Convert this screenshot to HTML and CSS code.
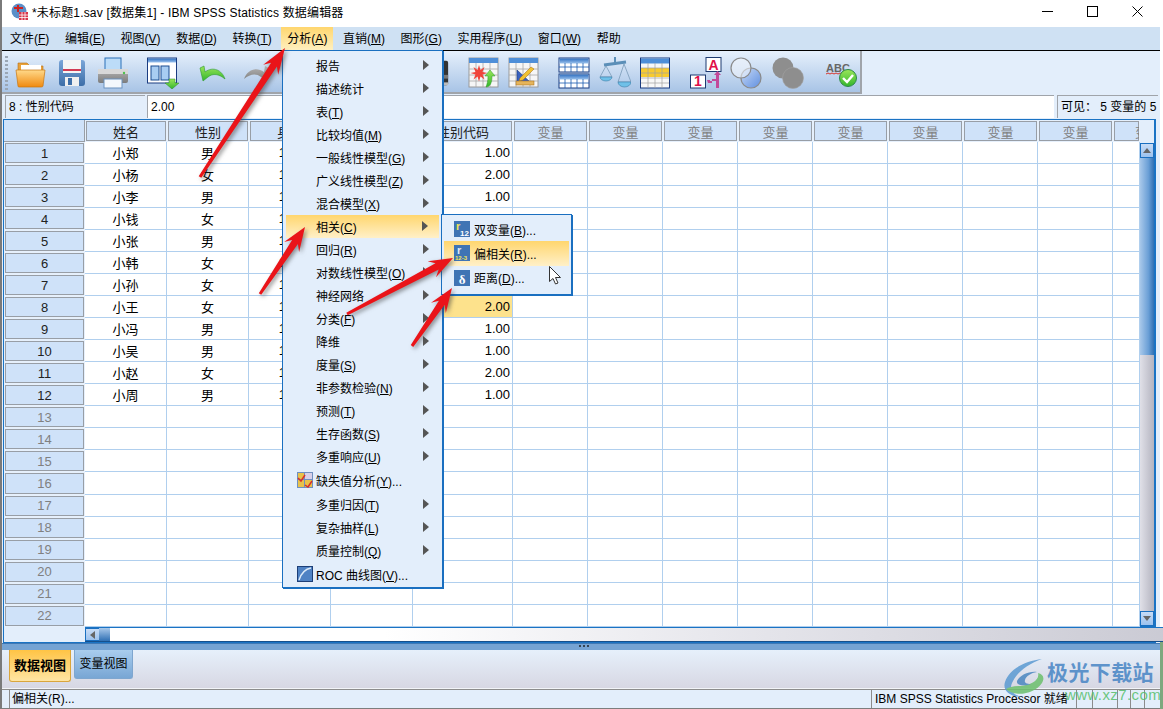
FILE: index.html
```html
<!DOCTYPE html>
<html lang="zh-CN">

<head>
  <meta charset="UTF-8">
  <title>IBM SPSS Statistics 数据编辑器</title>
  <link rel="stylesheet" href="styles.css">
</head>

<body>
  <svg class="svg-defs" width="0" height="0">
    <defs>
      <linearGradient id="gFolder" x1="0" y1="0" x2="0" y2="1"><stop offset="0" stop-color="#ffd98a"/><stop offset="1" stop-color="#f08a10"/></linearGradient>
      <linearGradient id="gBlue" x1="0" y1="0" x2="0" y2="1"><stop offset="0" stop-color="#7aa5d8"/><stop offset="1" stop-color="#3d6ea8"/></linearGradient>
      <linearGradient id="gHead" x1="0" y1="0" x2="0" y2="1"><stop offset="0" stop-color="#2f6fc0"/><stop offset="1" stop-color="#9cc3ee"/></linearGradient>
      <linearGradient id="gGreen" x1="0" y1="0" x2="0" y2="1"><stop offset="0" stop-color="#9be65a"/><stop offset="1" stop-color="#32b52c"/></linearGradient>
      <linearGradient id="gGray" x1="0" y1="0" x2="0" y2="1"><stop offset="0" stop-color="#b5b5b5"/><stop offset="1" stop-color="#7c7c7c"/></linearGradient>
      <linearGradient id="gRing" x1="0" y1="0" x2="1" y2="1"><stop offset="0" stop-color="#c8daf6"/><stop offset="1" stop-color="#5f8fe0"/></linearGradient>
    </defs>
  </svg>

  <div class="window">
    <header class="titlebar">
      <svg class="app-icon" viewBox="0 0 18 18" width="18" height="18">
        <circle cx="8" cy="8" r="7.5" fill="#5b8fc8"/>
        <path d="M3 5h9M7 2v7" stroke="#c22" stroke-width="2" fill="none"/>
        <rect x="8" y="9" width="9" height="8" fill="#d8344a"/>
        <path d="M8 12h9M8 14.5h9M11 9v8M14 9v8" stroke="#fff" stroke-width=".8"/>
      </svg>
      <span class="title-text">*未标题1.sav [数据集1] - IBM SPSS Statistics 数据编辑器</span>
      <div class="win-btns">
        <svg viewBox="0 0 11 11" width="11" height="11"><path d="M0 5.5h11" stroke="#000"/></svg>
        <svg viewBox="0 0 11 11" width="11" height="11"><rect x=".5" y=".5" width="10" height="10" fill="none" stroke="#000"/></svg>
        <svg viewBox="0 0 11 11" width="11" height="11"><path d="M.5 .5l10 10M10.5 .5l-10 10" stroke="#000"/></svg>
      </div>
    </header>

    <nav class="menubar">
      <span class="mb-item">文件(<u>F</u>)</span>
      <span class="mb-item">编辑(<u>E</u>)</span>
      <span class="mb-item">视图(<u>V</u>)</span>
      <span class="mb-item">数据(<u>D</u>)</span>
      <span class="mb-item">转换(<u>T</u>)</span>
      <span class="mb-item mb-active">分析(<u>A</u>)</span>
      <span class="mb-item">直销(<u>M</u>)</span>
      <span class="mb-item">图形(<u>G</u>)</span>
      <span class="mb-item">实用程序(<u>U</u>)</span>
      <span class="mb-item">窗口(<u>W</u>)</span>
      <span class="mb-item">帮助</span>
    </nav>

    <div class="toolbar-row">
      <div class="toolbar">
        <div class="tool-handle"></div>
        <div class="tool-group">
          <svg class="tool" viewBox="0 0 32 32">
            <path d="M3 6h9l3 3h13v6H3z" fill="#e8a23a" stroke="#b5701a" stroke-width=".6"/>
            <rect x="6" y="8" width="20" height="8" fill="#fff"/>
            <path d="M1 13h29l-2 16q0 1-2 1H4q-1 0-1-1z" fill="url(#gFolder)" stroke="#c9760e" stroke-width=".7"/>
          </svg>
          <svg class="tool tool-save" viewBox="0 0 28 28">
            <rect x="1" y="1" width="26" height="26" rx="3" fill="url(#gBlue)"/>
            <rect x="5" y="1" width="18" height="13" fill="#f4f4f4"/>
            <rect x="5" y="10" width="18" height="2" fill="#d23a52"/>
            <rect x="7" y="18" width="14" height="9" fill="#f0f0f0"/>
            <rect x="10" y="19" width="4" height="7" fill="#3d6ea8"/>
          </svg>
          <svg class="tool" viewBox="0 0 32 32">
            <rect x="8" y="1" width="16" height="12" fill="#bcdcf8" stroke="#2a70b8"/>
            <path d="M3 12h26q2 0 2 2v10q0 2-2 2H3q-2 0-2-2V14q0-2 2-2z" fill="url(#gGray)"/>
            <rect x="1" y="12" width="30" height="5" fill="#d8d8d8"/>
            <rect x="7" y="22" width="18" height="9" fill="#f4f8fc" stroke="#6d93bf"/>
            <circle cx="27" cy="16" r="1.2" fill="#4ec24e"/>
          </svg>
        </div>
        <div class="tool-group">
          <svg class="tool" viewBox="0 0 32 32">
            <rect x=".5" y="1" width="29" height="25" fill="#fff" stroke="#1b3c80"/>
            <rect x="1" y="1.5" width="28" height="4" fill="url(#gHead)"/>
            <rect x="4" y="9" width="8" height="14" fill="#a8cdf2" stroke="#1b4c90"/>
            <rect x="14" y="9" width="8" height="14" fill="#a8cdf2" stroke="#1b4c90"/>
            <path d="M22 22h6v4h4l-7 6-7-6h4z" fill="url(#gGreen)" stroke="#2a8a2a" stroke-width=".5"/>
          </svg>
        </div>
        <div class="tool-group tool-group-wide">
          <svg class="tool" viewBox="0 0 32 32">
            <path d="M3 11l3 13 5-4c5-4 11-3 17 2-3-9-12-13-20-7l-1-6z" fill="url(#gGreen)" stroke="#2e9a2e" stroke-width=".6"/>
          </svg>
          <svg class="tool" viewBox="0 0 32 32">
            <path d="M29 11l-3 13-5-4c-5-4-11-3-17 2 3-9 12-13 20-7l1-6z" fill="url(#gGray)"/>
          </svg>
        </div>
        <div class="tool-spacer"></div>
        <svg class="tool tool-binoc" viewBox="0 0 32 32">
          <rect x="2" y="3" width="11" height="26" rx="2" fill="#333"/>
          <rect x="19" y="3" width="11" height="26" rx="2" fill="#333"/>
          <rect x="19" y="18" width="11" height="4" fill="#777"/>
          <rect x="19" y="26" width="11" height="3" fill="#bbb"/>
        </svg>
        <div class="tool-group tool-group-mid">
          <svg class="tool" viewBox="0 0 32 32">
            <rect x="1" y="1" width="29" height="29" fill="#f6f6f6" stroke="#9a9a9a"/>
            <rect x="1" y="1" width="29" height="5" fill="#4f8fd8"/>
            <path d="M1 12h29M1 18h29M1 24h29M8 6v24M15 6v24M22 6v24" stroke="#a8a8a8" stroke-width=".8"/>
            <path d="M11 8l1.5 5 4-3-2 5 5 1-5 1.5 2 5-4-3-1.5 5-1.5-5-4 3 2-5-5-1.5 5-1-2-5 4 3z" fill="#f0443a"/>
            <path d="M18 30c4 0 6-4 6-11h3l-5-6-5 6h3c0 5-1 8-2 11z" fill="url(#gGreen)" stroke="#2e9a2e" stroke-width=".5"/>
          </svg>
          <svg class="tool" viewBox="0 0 32 32">
            <rect x="1" y="1" width="29" height="29" fill="#f6f6f6" stroke="#9a9a9a"/>
            <rect x="1" y="1" width="29" height="5" fill="#4f8fd8"/>
            <path d="M1 12h29M1 18h29M1 24h29M8 6v24M15 6v24M22 6v24" stroke="#a8a8a8" stroke-width=".8"/>
            <path d="M9 13v12h13z" fill="#3a62c0" stroke="#1b3c80" stroke-width=".6"/>
            <path d="M12 21l11-11 3 2-11 11-4 1z" fill="#f2c230" stroke="#a56a10" stroke-width=".5"/>
            <rect x="8" y="24" width="18" height="4" fill="#e4b45c" stroke="#a56a10" stroke-width=".5"/>
          </svg>
        </div>
        <div class="tool-group">
          <svg class="tool" viewBox="0 0 32 32">
            <rect x="1" y="1" width="30" height="14" fill="#fff" stroke="#1b3c80"/>
            <rect x="1.5" y="1.5" width="29" height="5" fill="url(#gHead)"/>
            <path d="M1 10h30M7 6v9M13 6v9M19 6v9M25 6v9" stroke="#1b5cb0" stroke-width=".8"/>
            <rect x="1" y="17" width="30" height="14" fill="#fff" stroke="#1b3c80"/>
            <rect x="1.5" y="17.5" width="29" height="5" fill="url(#gHead)"/>
            <path d="M1 26h30M7 22v9M13 22v9M19 22v9M25 22v9" stroke="#1b5cb0" stroke-width=".8"/>
          </svg>
          <svg class="tool" viewBox="0 0 32 32">
            <path d="M5 8l22-3" stroke="#5b8fb8" stroke-width="3"/>
            <path d="M16 0v8" stroke="#5b8fb8" stroke-width="2"/>
            <path d="M7 9L1 20h12zM25 7l-6 18h13z" fill="none" stroke="#7a9ab8" stroke-width=".8"/>
            <path d="M1 20a6 4 0 0 0 12 0z" fill="#6fc0e8" stroke="#3b7ea8" stroke-width=".6"/>
            <path d="M19 25a6.5 5 0 0 0 13 0z" fill="#6fc0e8" stroke="#3b7ea8" stroke-width=".6"/>
          </svg>
          <svg class="tool tool-tight" viewBox="0 0 30 32">
            <rect x=".5" y="1" width="29" height="30" fill="#f8f8f8" stroke="#1b3c80"/>
            <rect x="1" y="1.5" width="28" height="5" fill="#4f8fd8"/>
            <rect x="1" y="11" width="28" height="9" fill="#f8cb30"/>
            <path d="M1 11h28M1 16h28M1 21h28M1 26h28M8 6v25M15 6v25M22 6v25" stroke="#a0a0a0" stroke-width=".7"/>
          </svg>
        </div>
        <div class="tool-group tool-group-end">
          <svg class="tool" viewBox="0 0 32 32">
            <rect x="16" y=".5" width="15" height="14" fill="#fff" stroke="#1d3a70"/>
            <text x="23.5" y="12.5" class="icon-letter">A</text>
            <rect x=".5" y="18" width="15" height="13" fill="#fff" stroke="#1d3a70"/>
            <text x="8" y="29" class="icon-letter">1</text>
            <path d="M18 26h4v-4l4 0v9h3v-13h2l-3.500-4-3.500 4h2v6h-6v-1h-3z" fill="#c24a9a"/>
          </svg>
          <svg class="tool" viewBox="0 0 32 32">
            <circle cx="21" cy="21" r="10" fill="url(#gRing)" stroke="#8a8a8a" stroke-width="1.2"/>
            <circle cx="11" cy="11" r="10" fill="#f2f6fc" fill-opacity=".55" stroke="#8a8a8a" stroke-width="1.2"/>
          </svg>
          <svg class="tool tool-wider" viewBox="0 0 32 32">
            <circle cx="11" cy="11" r="10.5" fill="#8e8e8e"/>
            <circle cx="21" cy="21" r="10.5" fill="#8e8e8e" stroke="#a2a2a2" stroke-width=".6"/>
          </svg>
          <svg class="tool tool-widest" viewBox="0 0 32 32">
            <text x="1" y="15" class="icon-abc">ABC</text>
            <path d="M1 17l2-1 2 1 2-1 2 1 2-1 2 1 2-1 2 1" stroke="#d8342a" fill="none"/>
            <circle cx="23" cy="21" r="8.5" fill="url(#gGreen)" stroke="#2c8a4a"/>
            <path d="M18 21l4 4 6-7" stroke="#fff" stroke-width="2.4" fill="none"/>
          </svg>
        </div>
      </div>
    </div>

    <div class="cellbar">
      <div class="cell-name">8 : 性别代码</div>
      <div class="cell-value">2.00</div>
      <div class="cell-visible">可见： <span>5 变量的 5</span></div>
    </div>

    <section class="sheet">
      <div class="sheet-view">
        <table class="data-table">
          <colgroup>
            <col class="col-row"><col class="col-a"><col class="col-a"><col class="col-a"><col class="col-a"><col class="col-code">
            <col class="col-var"><col class="col-var"><col class="col-var"><col class="col-var"><col class="col-var"><col class="col-var"><col class="col-var"><col class="col-var"><col class="col-end">
          </colgroup>
          <thead>
            <tr><th class="corner"></th><th>姓名</th><th>性别</th><th>身高</th><th></th><th>性别代码</th><th class="off">变量</th><th class="off">变量</th><th class="off">变量</th><th class="off">变量</th><th class="off">变量</th><th class="off">变量</th><th class="off">变量</th><th class="off">变量</th><th class="off col-cut">变量</th></tr>
          </thead>
          <tbody>
            <tr><th>1</th><td>小郑</td><td>男</td><td>175</td><td></td><td class="num">1.00</td><td></td><td></td><td></td><td></td><td></td><td></td><td></td><td></td><td></td></tr>
            <tr><th>2</th><td>小杨</td><td>女</td><td>162</td><td></td><td class="num">2.00</td><td></td><td></td><td></td><td></td><td></td><td></td><td></td><td></td><td></td></tr>
            <tr><th>3</th><td>小李</td><td>男</td><td>178</td><td></td><td class="num">1.00</td><td></td><td></td><td></td><td></td><td></td><td></td><td></td><td></td><td></td></tr>
            <tr><th>4</th><td>小钱</td><td>女</td><td>160</td><td></td><td></td><td></td><td></td><td></td><td></td><td></td><td></td><td></td><td></td><td></td></tr>
            <tr><th>5</th><td>小张</td><td>男</td><td>172</td><td></td><td></td><td></td><td></td><td></td><td></td><td></td><td></td><td></td><td></td><td></td></tr>
            <tr><th>6</th><td>小韩</td><td>女</td><td>165</td><td></td><td></td><td></td><td></td><td></td><td></td><td></td><td></td><td></td><td></td><td></td></tr>
            <tr><th>7</th><td>小孙</td><td>女</td><td>158</td><td></td><td></td><td></td><td></td><td></td><td></td><td></td><td></td><td></td><td></td><td></td></tr>
            <tr><th>8</th><td>小王</td><td>女</td><td>163</td><td></td><td class="num selected">2.00</td><td></td><td></td><td></td><td></td><td></td><td></td><td></td><td></td><td></td></tr>
            <tr><th>9</th><td>小冯</td><td>男</td><td>180</td><td></td><td class="num">1.00</td><td></td><td></td><td></td><td></td><td></td><td></td><td></td><td></td><td></td></tr>
            <tr><th>10</th><td>小吴</td><td>男</td><td>170</td><td></td><td class="num">1.00</td><td></td><td></td><td></td><td></td><td></td><td></td><td></td><td></td><td></td></tr>
            <tr><th>11</th><td>小赵</td><td>女</td><td>161</td><td></td><td class="num">2.00</td><td></td><td></td><td></td><td></td><td></td><td></td><td></td><td></td><td></td></tr>
            <tr><th>12</th><td>小周</td><td>男</td><td>176</td><td></td><td class="num">1.00</td><td></td><td></td><td></td><td></td><td></td><td></td><td></td><td></td><td></td></tr>
            <tr><th class="off">13</th><td></td><td></td><td></td><td></td><td></td><td></td><td></td><td></td><td></td><td></td><td></td><td></td><td></td><td></td></tr>
            <tr><th class="off">14</th><td></td><td></td><td></td><td></td><td></td><td></td><td></td><td></td><td></td><td></td><td></td><td></td><td></td><td></td></tr>
            <tr><th class="off">15</th><td></td><td></td><td></td><td></td><td></td><td></td><td></td><td></td><td></td><td></td><td></td><td></td><td></td><td></td></tr>
            <tr><th class="off">16</th><td></td><td></td><td></td><td></td><td></td><td></td><td></td><td></td><td></td><td></td><td></td><td></td><td></td><td></td></tr>
            <tr><th class="off">17</th><td></td><td></td><td></td><td></td><td></td><td></td><td></td><td></td><td></td><td></td><td></td><td></td><td></td><td></td></tr>
            <tr><th class="off">18</th><td></td><td></td><td></td><td></td><td></td><td></td><td></td><td></td><td></td><td></td><td></td><td></td><td></td><td></td></tr>
            <tr><th class="off">19</th><td></td><td></td><td></td><td></td><td></td><td></td><td></td><td></td><td></td><td></td><td></td><td></td><td></td><td></td></tr>
            <tr><th class="off">20</th><td></td><td></td><td></td><td></td><td></td><td></td><td></td><td></td><td></td><td></td><td></td><td></td><td></td><td></td></tr>
            <tr><th class="off">21</th><td></td><td></td><td></td><td></td><td></td><td></td><td></td><td></td><td></td><td></td><td></td><td></td><td></td><td></td></tr>
            <tr><th class="off">22</th><td></td><td></td><td></td><td></td><td></td><td></td><td></td><td></td><td></td><td></td><td></td><td></td><td></td><td></td></tr>
          </tbody>
        </table>
        <div class="vscroll">
          <div class="sb-btn"><i class="tri-up"></i></div>
          <div class="vthumb"></div>
          <div class="vtrack"></div>
          <div class="sb-btn"><i class="tri-down"></i></div>
        </div>
      </div>
      <div class="hscroll">
        <div class="sb-btn sb-left"><i class="tri-left"></i></div>
        <div class="hthumb"></div>
        <div class="htrack"></div>
        <div class="sb-btn"><i class="tri-right"></i></div>
      </div>
    </section>

    <div class="splitter"><span></span></div>

    <div class="tabs">
      <div class="tab tab-on">数据视图</div>
      <div class="tab">变量视图</div>
    </div>

    <footer class="statusbar">
      <div class="st-main">偏相关(R)...</div>
      <div class="st-proc">IBM SPSS Statistics Processor 就绪</div>
      <div class="st-cell st-w16"></div>
      <div class="st-cell st-w25"></div>
      <div class="st-cell st-w13"></div>
      <div class="st-cell st-w14"></div>
      <div class="st-cell st-w10"></div>
    </footer>
  </div>

  <ul class="menu">
    <li class="sub"><span>报告</span></li>
    <li class="sub"><span>描述统计</span></li>
    <li class="sub"><span>表(<u>T</u>)</span></li>
    <li class="sub"><span>比较均值(<u>M</u>)</span></li>
    <li class="sub"><span>一般线性模型(<u>G</u>)</span></li>
    <li class="sub"><span>广义线性模型(<u>Z</u>)</span></li>
    <li class="sub"><span>混合模型(<u>X</u>)</span></li>
    <li class="sub hot"><span>相关(<u>C</u>)</span></li>
    <li class="sub"><span>回归(<u>R</u>)</span></li>
    <li class="sub"><span>对数线性模型(<u>O</u>)</span></li>
    <li class="sub"><span>神经网络</span></li>
    <li class="sub"><span>分类(<u>F</u>)</span></li>
    <li class="sub"><span>降维</span></li>
    <li class="sub"><span>度量(<u>S</u>)</span></li>
    <li class="sub"><span>非参数检验(<u>N</u>)</span></li>
    <li class="sub"><span>预测(<u>T</u>)</span></li>
    <li class="sub"><span>生存函数(<u>S</u>)</span></li>
    <li class="sub"><span>多重响应(<u>U</u>)</span></li>
    <li class="with-icon">
      <svg class="menu-icon" viewBox="0 0 16 16">
        <rect width="16" height="16" fill="#6f8fc0"/>
        <rect x="1" y="1" width="6" height="6" fill="#e8c24a"/><rect x="8" y="1" width="7" height="6" fill="#d8d0e8"/>
        <rect x="1" y="8" width="6" height="7" fill="#e8c24a"/><rect x="8" y="8" width="7" height="7" fill="#e8c24a"/>
        <path d="M1 6l3 3 4-6M8 13l3 2 4-6" stroke="#d8302a" stroke-width="1.5" fill="none"/>
      </svg>
      <span>缺失值分析(<u>Y</u>)...</span>
    </li>
    <li class="sub"><span>多重归因(<u>T</u>)</span></li>
    <li class="sub"><span>复杂抽样(<u>L</u>)</span></li>
    <li class="sub"><span>质量控制(<u>Q</u>)</span></li>
    <li class="with-icon">
      <svg class="menu-icon" viewBox="0 0 16 16">
        <rect x=".5" y=".5" width="15" height="15" fill="#4f82c4" stroke="#1d3f78"/>
        <path d="M2 14C4 8 8 3 14 2" stroke="#dbe9f8" stroke-width="1.5" fill="none"/>
      </svg>
      <span>ROC 曲线图(<u>V</u>)...</span>
    </li>
  </ul>

  <ul class="submenu">
    <li>
      <svg class="menu-icon" viewBox="0 0 16 16">
        <rect width="16" height="16" fill="#3f74b4"/>
        <text x="2" y="9" class="icon-r icon-yellow">r</text>
        <text x="6" y="15" class="icon-num">12</text>
      </svg>
      <span>双变量(<u>B</u>)...</span>
    </li>
    <li class="hot">
      <svg class="menu-icon" viewBox="0 0 16 16">
        <rect width="16" height="16" fill="#3f74b4"/>
        <text x="3" y="9" class="icon-r">r</text>
        <text x="1" y="15" class="icon-num icon-small icon-yellow">12-3</text>
      </svg>
      <span>偏相关(<u>R</u>)...</span>
    </li>
    <li>
      <svg class="menu-icon" viewBox="0 0 16 16">
        <rect width="16" height="16" fill="#3f74b4"/>
        <text x="8" y="14" class="icon-delta">δ</text>
      </svg>
      <span>距离(<u>D</u>)...</span>
    </li>
  </ul>

  <svg class="marks" viewBox="0 0 1163 709" width="1163" height="709">
    <g class="red-arrows">
      <polygon points="201.3,177.8 276.9,66.6 278.2,74.7 285,48 263.2,64.7 271.1,62.8 198.7,176.2"/>
      <polygon points="261.2,294.8 297.9,243.9 299.1,251.9 305,227 284.1,241.9 292.1,239.9 258.8,293.2"/>
      <polygon points="347.7,315.3 438.7,269.5 436,277.2 453,258 427.6,261.2 435.5,263.3 346.3,312.7"/>
      <polygon points="413.2,346.9 444.7,304.8 445.8,312.9 452,288 431,302.7 438.9,300.8 410.8,345.1"/>
    </g>
    <path class="pointer" d="M549.5 266.5v15l3.5-3 2.5 5.5 2.5-1-2.500-5.500h5z"/>
    <g class="wm-logo">
      <path d="M1042 659c-16 2-32 9-37 23-3 9 6 15 17 15-9-2-13-7-10-14 5-11 16-19 30-24z" fill="#5b9ad2"/>
      <path d="M1006 689c8 8 28 6 36-6 3-5 1-9-4-10 2 7-7 12-18 13-6 0-11 1-14 3z" fill="#6cc06c"/>
      <path d="M1017 681c3-6 12-10 20-9-6 1-11 4-12 8-1 3 2 4 6 4-6 2-15 2-14-3z" fill="#4a86c0"/>
    </g>
  </svg>

  <div class="watermark">
    <div class="wm-name">极光下载站</div>
    <div class="wm-url">www.xz7.com</div>
  </div>
</body>

</html>
```

FILE: styles.css
```css
html,
body {
  margin: 0;
  height: 100%;
}

body {
  position: relative;
  width: 1163px;
  height: 709px;
  overflow: hidden;
  background: linear-gradient(to bottom, #fff 640px, #7ea87e 640px);
  font-family: "Liberation Sans", "Noto Sans CJK SC", sans-serif;
  font-size: 12px;
  color: #000;
}

ul {
  margin: 0;
  padding: 0;
  list-style: none;
}

.svg-defs {
  display: block;
  height: 0;
}

.window {
  display: flex;
  flex-direction: column;
  box-sizing: border-box;
  width: 1160px;
  height: 709px;
  border-left: 2px solid #7a7a7a;
  border-bottom: 3px solid #7d7d7d;
  background-color: #e3eefb;
}

/* title */
.titlebar {
  display: flex;
  align-items: center;
  flex: none;
  box-sizing: border-box;
  height: 27px;
  padding: 0 0 4px 9px;
  background-color: #fff;
}

.app-icon {
  margin-right: 3px;
}

.title-text {
  letter-spacing: .17px;
}

.win-btns {
  display: flex;
  gap: 34px;
  margin-left: auto;
  padding-right: 17px;
}

/* menu bar */
.menubar {
  display: flex;
  flex: none;
  box-sizing: border-box;
  height: 24px;
  padding-left: 2px;
  border-bottom: 1px solid #000;
  background-color: #cfe1f3;
}

.mb-item {
  padding: 2px 6px 0;
  margin-right: 3.6px;
  line-height: 21px;
  font-size: 12px;
}

.mb-active {
  background: linear-gradient(to bottom, #ffd66e, #fff0c0);
}

/* toolbar */
.toolbar-row {
  flex: none;
  height: 44px;
}

.toolbar {
  display: flex;
  align-items: center;
  box-sizing: border-box;
  width: 860px;
  height: 43px;
  padding-top: 3px;
  border-right: 2px solid #a0a4aa;
  border-bottom: 2px solid #a0a4aa;
  background: linear-gradient(to bottom, #e6f0fc, #a8c4e6);
}

.tool-handle {
  width: 3px;
  height: 34px;
  margin: 0 7px 0 3px;
  background: repeating-linear-gradient(to bottom, #9aa6b4 0 2px, transparent 2px 4px);
}

.tool-group {
  display: flex;
  gap: 9px;
  margin-right: 18px;
}

.tool {
  flex: none;
  width: 32px;
  height: 32px;
}

.tool-save {
  width: 28px;
  height: 28px;
  margin: 2px;
}

.tool-group-wide {
  gap: 11px;
  margin-right: 0;
}

.tool-spacer {
  width: 148px;
}

.tool-binoc {
  width: 30px;
  margin-right: 18px;
}

.tool-group-mid {
  gap: 8px;
}

.tool-tight {
  width: 30px;
}

.tool-group-end {
  gap: 8px;
  margin: 0 0 0 2px;
}

.tool-wider {
  margin-left: 2px;
}

.tool-widest {
  margin-left: 13px;
}

.icon-letter {
  font: bold 14px "Liberation Sans", sans-serif;
  fill: #e0104a;
  text-anchor: middle;
}

.icon-abc {
  font: bold 11px "Liberation Sans", sans-serif;
  fill: #666;
}

/* cell editor row */
.cellbar {
  display: flex;
  flex: none;
  gap: 2px;
  height: 24px;
  padding-left: 3px;
}

.cell-name,
.cell-value,
.cell-visible {
  box-sizing: border-box;
  height: 23px;
  padding-left: 3px;
  line-height: 23px;
  border-top: 1px solid #a0a4aa;
  border-left: 1px solid #a0a4aa;
  white-space: nowrap;
  overflow: hidden;
}

.cell-name {
  flex: none;
  width: 140px;
}

.cell-value {
  flex: none;
  width: 907px;
  background-color: #fff;
}

.cell-visible {
  flex: none;
  width: 101px;
  margin-left: 1px;
  font-size: 12px;
}

/* sheet */
.sheet {
  flex: none;
  box-sizing: border-box;
  width: 1153px;
  height: 524px;
  margin-left: 1px;
  border: 1px solid #1a73c4;
  border-right-width: 2px;
}

.sheet-view {
  display: flex;
  height: 507px;
}

.data-table {
  flex: none;
  box-sizing: border-box;
  width: 1136px;
  table-layout: fixed;
  border-collapse: separate;
  border-spacing: 0;
  background-color: #fff;
  font-size: 13px;
}

.col-row {
  width: 81px;
}

.col-a {
  width: 82px;
}

.col-code {
  width: 100px;
}

.col-var {
  width: 75px;
}

.col-end {
  width: 27px;
}

.data-table tr {
  height: 22px;
}

.data-table th,
.data-table td {
  box-sizing: border-box;
  height: 22px;
  padding: 0;
  font-weight: normal;
  text-align: center;
  white-space: nowrap;
  overflow: hidden;
}

.data-table th {
  border: 1px solid #e6f0fc;
  box-shadow: inset 0 0 0 1px #989ea6;
  background-color: #cfe2f9;
  color: #222;
}

.data-table .corner {
  border: 0;
  box-shadow: inset -1px -1px 0 #989ea6;
}

.data-table .off {
  color: #808080;
}

.data-table .col-cut {
  padding-left: 21px;
  text-align: left;
}

.data-table td {
  border-right: 1px solid #b0cfee;
  border-bottom: 1px solid #b0cfee;
}

.data-table .num {
  padding-right: 2px;
  text-align: right;
}

.data-table .selected {
  background-color: #fde28c;
}

/* scrollbars */
.vscroll {
  display: flex;
  flex-direction: column;
  flex: none;
  box-sizing: border-box;
  width: 15px;
  height: 507px;
  padding-top: 23px;
  border-bottom: 1px solid #1a73c4;
}

.vscroll .sb-btn {
  width: 14px;
  height: 15px;
}

.vthumb {
  flex: none;
  width: 14px;
  height: 197px;
  background: linear-gradient(to right, #a8c8ea, #6a9fd6 60%, #2f70b4);
}

.vtrack {
  flex: 1;
  width: 14px;
  background: linear-gradient(to right, #e0e0e8, #b4b4c0);
}

.sb-btn {
  display: flex;
  align-items: center;
  justify-content: center;
  flex: none;
  box-sizing: border-box;
  width: 15px;
  height: 15px;
  border: 1px solid #1a6fc0;
  background: linear-gradient(to bottom, #c8dcf6, #9cc2ee);
}

.tri-up,
.tri-down,
.tri-left,
.tri-right {
  width: 0;
  height: 0;
  border: 4px solid transparent;
}

.tri-up {
  border-top: 0;
  border-bottom: 5px solid #666;
}

.tri-down {
  border-bottom: 0;
  border-top: 5px solid #666;
}

.tri-left {
  border-left: 0;
  border-right: 5px solid #666;
}

.tri-right {
  border-right: 0;
  border-left: 5px solid #666;
}

.hscroll {
  display: flex;
  box-sizing: border-box;
  width: 1136px;
  height: 15px;
  margin-left: 81px;
  border-top: 1px solid #1a73c4;
  border-bottom: 1px solid #16508c;
}

.hscroll .sb-btn {
  height: 13px;
}

.sb-left {
  margin-right: -1px;
}

.hthumb {
  flex: none;
  width: 11px;
  background: linear-gradient(to bottom, #a8c8ea, #2f70b4);
}

.htrack {
  flex: 1;
  background: linear-gradient(to right, #fff 0, #fff 25%, #e4e4ea 60%, #c8c8d2 100%);
}

/* splitter, tabs, status */
.splitter {
  display: flex;
  justify-content: center;
  flex: none;
  height: 6px;
  border-top: 1px solid #3f78b4;
  background-color: #75a3d3;
}

.splitter span {
  width: 12px;
  height: 2px;
  margin: 1px 0 0 7px;
  background: repeating-linear-gradient(to right, #345 0 2px, transparent 2px 4px);
}

.tabs {
  display: flex;
  align-items: flex-start;
  flex: none;
  gap: 3px;
  box-sizing: border-box;
  height: 39px;
  padding: 0 0 0 7px;
  background: linear-gradient(to bottom, #e6f0fb, #d7d7e3);
  border-bottom: 1px solid #f2f4f8;
}

.tab {
  box-sizing: border-box;
  width: 59px;
  height: 29px;
  padding-top: 4px;
  border: 1px solid #7ea6cf;
  border-top: 0;
  border-radius: 0 0 3px 3px;
  background: linear-gradient(to bottom, #a9cdee, #78a6d4);
  font-size: 12px;
  line-height: 20px;
  text-align: center;
  white-space: nowrap;
}

.tab-on {
  width: 62px;
  height: 32px;
  padding-top: 6px;
  border-color: #d9a53c;
  background: linear-gradient(to bottom, #ffc445, #ffe5a3);
  font-size: 13px;
  font-weight: bold;
}

.statusbar {
  display: flex;
  flex: none;
  height: 18px;
  padding-left: 7px;
  border-top: 1px solid #8c8c8c;
  background-color: #e3eefb;
}

.st-main,
.st-proc,
.st-cell {
  box-sizing: border-box;
  height: 18px;
  padding-left: 2px;
  line-height: 18px;
  border-left: 1px solid #8c8c8c;
  white-space: nowrap;
}

.st-main {
  width: 862px;
}

.st-proc {
  width: 205px;
  padding-left: 3px;
}

.st-w16 {
  width: 16px;
}

.st-w25 {
  width: 25px;
}

.st-w13 {
  width: 13px;
}

.st-w14 {
  width: 14px;
}

.st-w10 {
  width: 10px;
}

/* popup menus */
.menu,
.submenu {
  position: absolute;
  display: flex;
  flex-direction: column;
  box-sizing: border-box;
  border: 1px solid #1a6fc0;
  background-color: #e3eefb;
  box-shadow: 1px 1px 0 #1a6fc0;
}

.menu {
  left: 282px;
  top: 50px;
  width: 161px;
  height: 538px;
  padding: 2.5px 2px 0;
}

.menu li {
  position: relative;
  display: flex;
  align-items: center;
  flex: none;
  height: 23px;
  padding-left: 31px;
  white-space: nowrap;
}

.menu .with-icon {
  height: 25px;
}

.menu .sub::after {
  content: "";
  position: absolute;
  right: 11px;
  top: 50%;
  margin-top: -5px;
  border: 5px solid transparent;
  border-left: 6px solid #555;
  border-right: 0;
}

.menu .hot,
.submenu .hot {
  background: linear-gradient(to bottom, #ffd66e, #fff0c8);
}

.menu .hot {
  margin: 0 1px;
  padding-left: 30px;
}

.submenu {
  left: 441px;
  top: 214px;
  width: 131px;
  height: 81px;
  padding: 2px 2px 4px;
}

.submenu li {
  display: flex;
  align-items: center;
  flex: 1 1 0;
  padding-left: 10px;
  white-space: nowrap;
}

.menu-icon {
  flex: none;
  width: 16px;
  height: 16px;
  margin-right: 4px;
}

.menu li .menu-icon {
  margin-left: -19px;
  margin-right: 3px;
}

.icon-r {
  font: bold 11px "Liberation Sans", sans-serif;
  fill: #dfe8f4;
}

.icon-num {
  font: bold 8px "Liberation Sans", sans-serif;
  fill: #fff;
}

.icon-small {
  font-size: 6px;
}

.icon-yellow {
  fill: #f2e45a;
}

.icon-delta {
  font: bold 13px "Liberation Serif", serif;
  fill: #fff;
  text-anchor: middle;
}

/* overlays */
.marks {
  position: absolute;
  left: 0;
  top: 0;
}

.red-arrows polygon {
  fill: #ea1419;
  filter: drop-shadow(2px 2px 2px rgba(60, 60, 60, .55));
}

.pointer {
  fill: #fff;
  stroke: #333;
}

.wm-logo {
  opacity: .85;
}

.watermark {
  position: absolute;
  left: 1047px;
  top: 658px;
  width: 112px;
}

.wm-name {
  font-family: "Noto Sans CJK SC", sans-serif;
  font-size: 21px;
  font-weight: bold;
  line-height: 26px;
  letter-spacing: .4px;
  color: rgba(70, 132, 196, .85);
  white-space: nowrap;
}

.wm-url {
  margin: 2px 0 0 18px;
  font-size: 15px;
  line-height: 17px;
  letter-spacing: .4px;
  color: rgba(84, 190, 104, .85);
  white-space: nowrap;
}
```
